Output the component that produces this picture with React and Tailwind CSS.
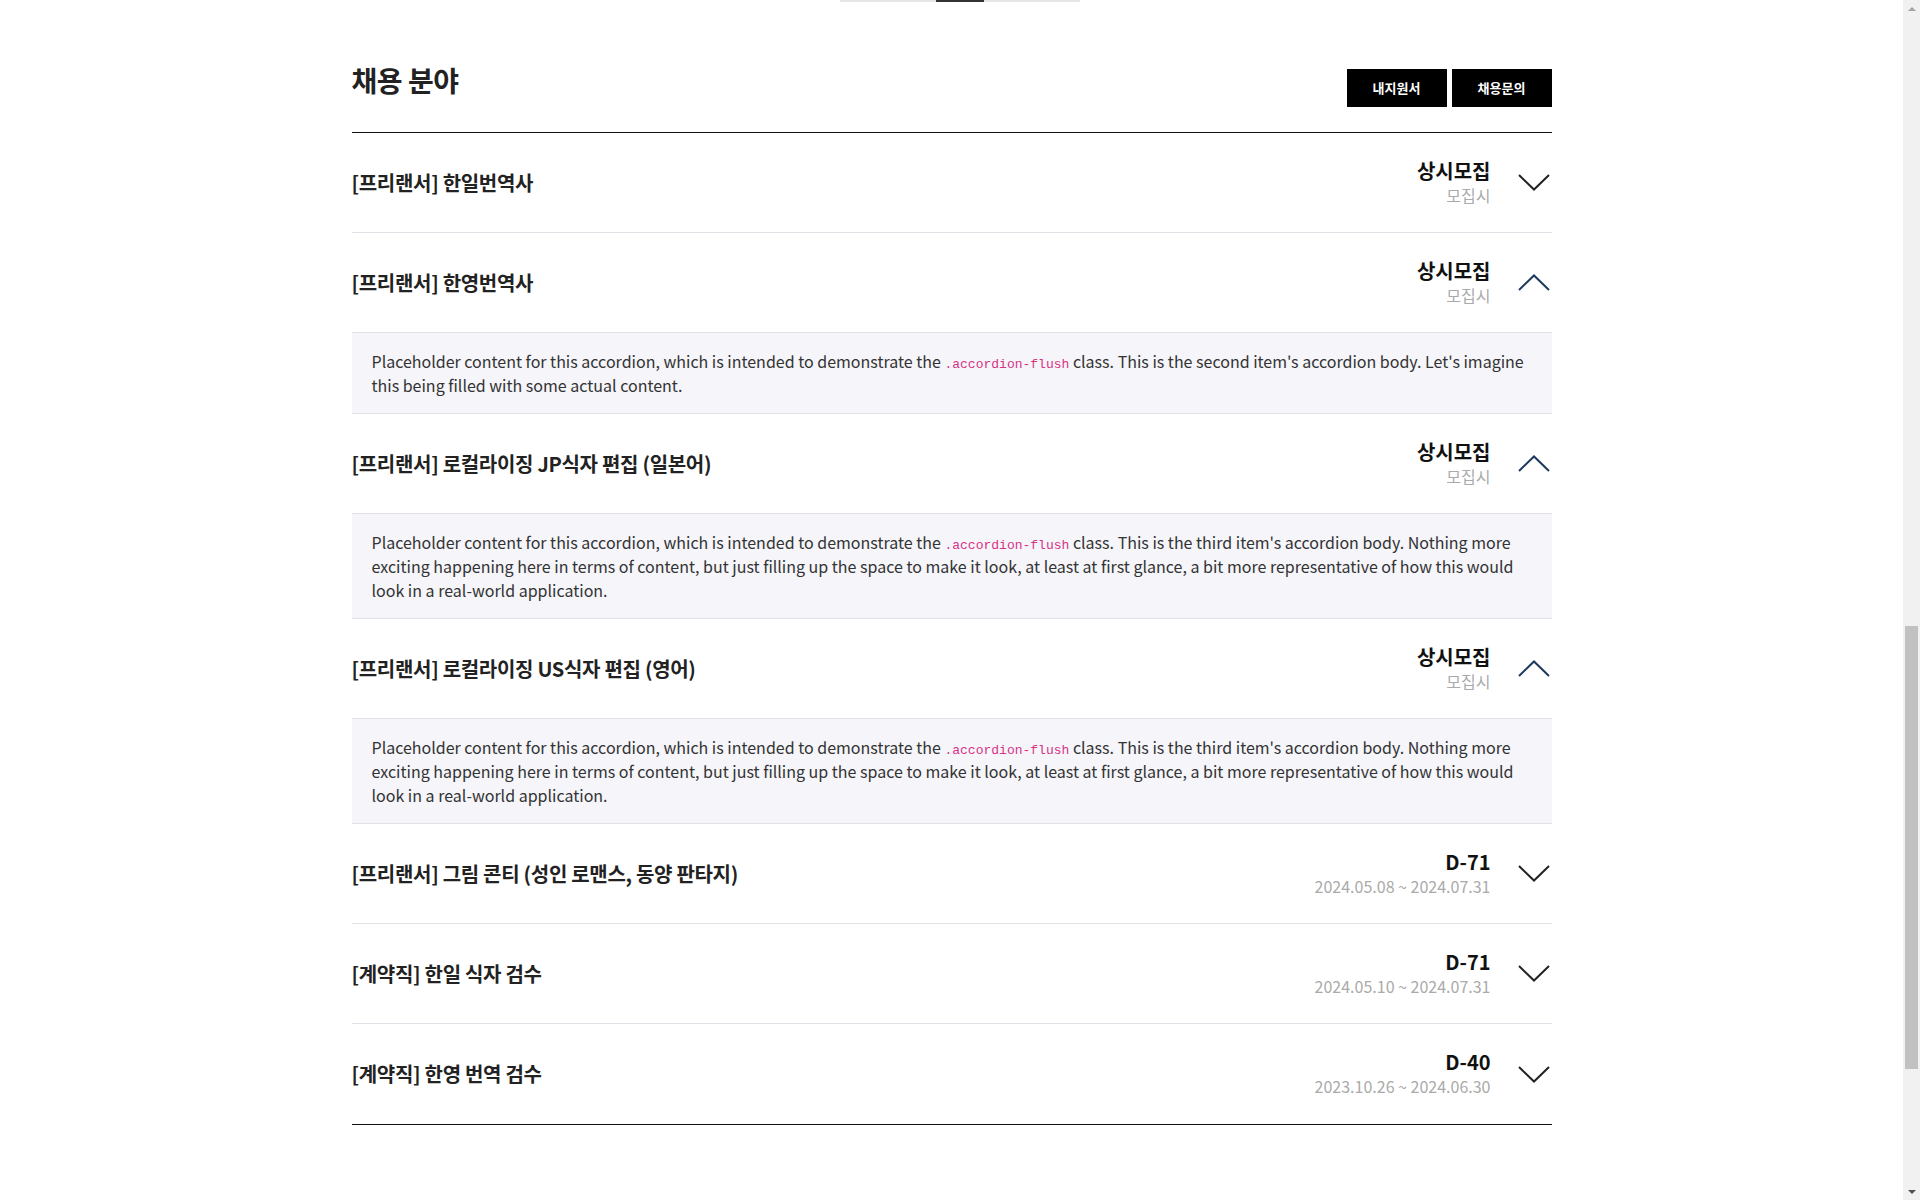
import { useEffect, useRef, useState } from 'react';

const SECOND = "This is the second item's accordion body. Let's imagine this being filled with some actual content.";
const THIRD = "This is the third item's accordion body. Nothing more exciting happening here in terms of content, but just filling up the space to make it look, at least at first glance, a bit more representative of how this would look in a real-world application.";

const jobs = [
  { id: 1, title: '[프리랜서] 한일번역사', status: '상시모집', sub: '모집시' },
  { id: 2, title: '[프리랜서] 한영번역사', status: '상시모집', sub: '모집시', body: SECOND },
  { id: 3, title: '[프리랜서] 로컬라이징 JP식자 편집 (일본어)', status: '상시모집', sub: '모집시', body: THIRD },
  { id: 4, title: '[프리랜서] 로컬라이징 US식자 편집 (영어)', status: '상시모집', sub: '모집시', body: THIRD },
  { id: 5, title: '[프리랜서] 그림 콘티 (성인 로맨스, 동양 판타지)', status: 'D-71', sub: '2024.05.08 ~ 2024.07.31' },
  { id: 6, title: '[계약직] 한일 식자 검수', status: 'D-71', sub: '2024.05.10 ~ 2024.07.31' },
  { id: 7, title: '[계약직] 한영 번역 검수', status: 'D-40', sub: '2023.10.26 ~ 2024.06.30' },
];

function Chevron({ up }) {
  return (
    <svg width="32" height="17" viewBox="0 0 32 17" fill="none" className="shrink-0">
      <path
        d={up ? 'M1 16 L16 1.5 L31 16' : 'M1 1 L16 15.5 L31 1'}
        stroke={up ? '#1d3a5e' : '#222'}
        strokeWidth="2"
      />
    </svg>
  );
}

// classic scrollbar look (the browser's own one is hidden in headless mode)
function ScrollBar() {
  return (
    <div className="w-[17px] shrink-0 h-screen bg-[#f1f1f1] flex flex-col">
      <div className="h-[17px] flex items-center justify-center">
        <svg width="8" height="4" viewBox="0 0 8 4"><path d="M0 4 L4 0 L8 4 Z" fill="#a3a3a3" /></svg>
      </div>
      <div className="h-[609px]" />
      <div className="h-[443px] mx-[2px] bg-[#c1c1c1]" />
      <div className="flex-1" />
      <div className="h-[17px] flex items-center justify-center">
        <svg width="8" height="4" viewBox="0 0 8 4"><path d="M0 0 L4 4 L8 0 Z" fill="#505050" /></svg>
      </div>
    </div>
  );
}

export default function App() {
  const [open, setOpen] = useState({ 2: true, 3: true, 4: true });
  const scroller = useRef(null);

  useEffect(() => {
    if (scroller.current) scroller.current.scrollTop = 1650;
  }, []);

  const toggle = id => setOpen(o => ({ ...o, [id]: !o[id] }));

  return (
    <div className="flex h-screen bg-white text-[#111] font-['Noto_Sans_CJK_KR','Noto_Sans',sans-serif]">
      <div ref={scroller} className="flex-1 h-screen overflow-y-auto">
        {/* upper part of page, scrolled past */}
        <div className="h-[1652px] flex flex-col justify-end items-center">
          <div className="flex w-[240px] ml-[17px]">
            <div className="w-[48px] h-[40px] border-b-2 border-[#e5e5e5]" />
            <div className="w-[48px] h-[40px] border-b-2 border-[#e5e5e5]" />
            <div className="w-[48px] h-[40px] border-b-2 border-[#333]" />
            <div className="w-[48px] h-[40px] border-b-2 border-[#e5e5e5]" />
            <div className="w-[48px] h-[40px] border-b-2 border-[#e5e5e5]" />
          </div>
        </div>

        <section className="w-[1200px] mx-auto pt-[58px] pb-[382px]">
          {/* Title row */}
          <div className="flex justify-between items-start pb-[25px]">
            <h2 className="text-[28px] leading-[40px] font-bold text-[#222] tracking-[-0.5px]">채용 분야</h2>
            <div className="flex gap-[5px] mt-[9px]">
              <button className="w-[100px] h-[38px] bg-black text-white text-[13px] font-bold">내지원서</button>
              <button className="w-[100px] h-[38px] bg-black text-white text-[13px] font-bold">채용문의</button>
            </div>
          </div>

          {/* Accordion list */}
          <div className="border-t border-b border-[#111]">
            {jobs.map((job, i) => {
              const isOpen = !!open[job.id] && job.body;
              const last = i === jobs.length - 1;
              return (
                <div key={job.id}>
                  <button
                    onClick={() => toggle(job.id)}
                    className={`w-full h-[100px] flex items-center justify-between text-left ${last && !isOpen ? '' : 'border-b border-[#e1e1e8]'}`}
                  >
                    <span className="text-[20px] font-semibold text-[#222] tracking-[-0.3px]">{job.title}</span>
                    <span className="flex items-center">
                      <span className="flex flex-col items-end">
                        <span className="text-[20px] leading-[24px] font-bold text-[#111]">{job.status}</span>
                        <span className="text-[16px] leading-[24px] text-[#aaa]">{job.sub}</span>
                      </span>
                      <span className="ml-[27px] mr-[2px]">
                        <Chevron up={isOpen} />
                      </span>
                    </span>
                  </button>
                  {isOpen && (
                    <div className="bg-[#f5f5fa] px-[20px] py-[16px] border-b border-[#e1e1e8] text-[16px] leading-[24px] text-[#333]">
                      Placeholder content for this accordion, which is intended to demonstrate the{' '}
                      <code className="font-['Liberation_Mono',monospace] text-[13px] leading-[1] text-[#d63384]">.accordion-flush</code>{' '}
                      class. {job.body}
                    </div>
                  )}
                </div>
              );
            })}
          </div>
        </section>
      </div>
      <ScrollBar />
    </div>
  );
}
